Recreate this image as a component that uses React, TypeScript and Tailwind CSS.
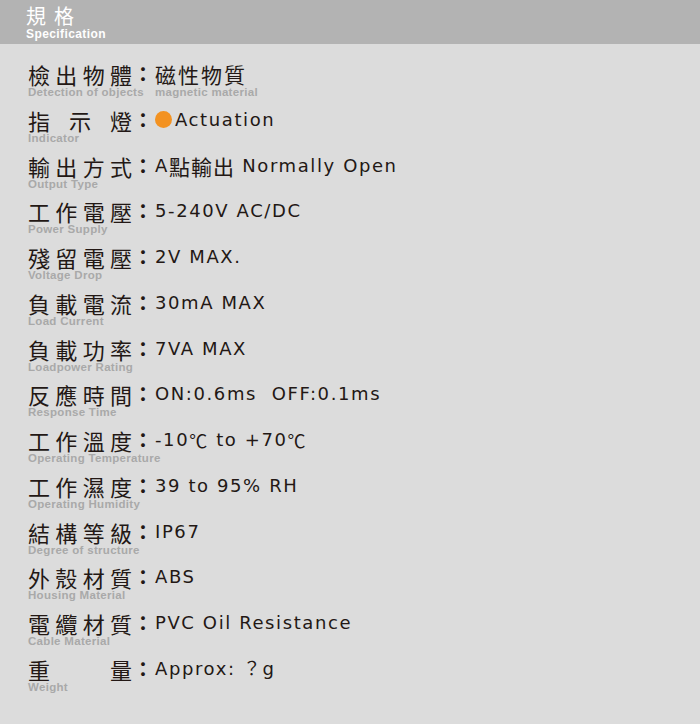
import React from 'react';

interface Spec {
  label: string[];
  en: string;
  value: React.ReactNode;
  valueEn?: string;
}

const SPECS: Spec[] = [
  { label: ['檢', '出', '物', '體'], en: 'Detection of objects', value: <span className="font-['Noto_Sans_CJK_TC',sans-serif] text-[21px] tracking-[2px]">磁性物質</span>, valueEn: 'magnetic material' },
  {
    label: ['指', '示', '燈'],
    en: 'Indicator',
    value: (
      <span className="flex items-center">
        <span className="mr-[3px] inline-block h-[17px] w-[17px] rounded-full bg-[#f39221]" />
        Actuation
      </span>
    ),
  },
  { label: ['輸', '出', '方', '式'], en: 'Output Type', value: <>A<span className="font-['Noto_Sans_CJK_TC',sans-serif] text-[21px] tracking-[1px]">點輸出</span> Normally Open</> },
  { label: ['工', '作', '電', '壓'], en: 'Power Supply', value: '5-240V AC/DC' },
  { label: ['殘', '留', '電', '壓'], en: 'Voltage Drop', value: '2V MAX.' },
  { label: ['負', '載', '電', '流'], en: 'Load Current', value: '30mA MAX' },
  { label: ['負', '載', '功', '率'], en: 'Loadpower Rating', value: '7VA MAX' },
  { label: ['反', '應', '時', '間'], en: 'Response Time', value: 'ON:0.6ms  OFF:0.1ms' },
  { label: ['工', '作', '溫', '度'], en: 'Operating Temperature', value: <>-10<span className="font-['Noto_Sans_CJK_TC',sans-serif]">℃</span> to +70<span className="font-['Noto_Sans_CJK_TC',sans-serif]">℃</span></> },
  { label: ['工', '作', '濕', '度'], en: 'Operating Humidity', value: '39 to 95% RH' },
  { label: ['結', '構', '等', '級'], en: 'Degree of structure', value: 'IP67' },
  { label: ['外', '殼', '材', '質'], en: 'Housing Material', value: 'ABS' },
  { label: ['電', '纜', '材', '質'], en: 'Cable Material', value: 'PVC Oil Resistance' },
  { label: ['重', '量'], en: 'Weight', value: 'Approx: ？g' },
];

const SpecRow = ({ spec }: { spec: Spec }) => (
  <div className="h-[45.77px]">
    <div className="flex h-[24px] items-center text-[#231815]">
      <div className="flex w-[104px] justify-between font-['Noto_Sans_CJK_TC',sans-serif] text-[22px] leading-[24px]">
        {spec.label.map((ch, i) => (
          <span key={i}>{ch}</span>
        ))}
      </div>
      <span className="w-[22px] text-center font-['Noto_Sans_CJK_TC',sans-serif] text-[20px] font-bold leading-[24px]">：</span>
      <div className="ml-[1px] flex items-center whitespace-pre font-['DejaVu_Sans','Noto_Sans_CJK_TC',sans-serif] text-[18px] leading-[24px] tracking-[1.6px]">
        {spec.value}
      </div>
    </div>
    <div className="flex font-['Liberation_Sans',Arial,sans-serif] text-[11.5px] font-bold leading-[13px] tracking-[0.3px] text-[#a9a9a9]">
      <span className="w-[127px] whitespace-nowrap">{spec.en}</span>
      {spec.valueEn && <span className="whitespace-nowrap">{spec.valueEn}</span>}
    </div>
  </div>
);

export default function App() {
  return (
    <div className="h-[724px] w-[700px] overflow-hidden bg-[#dcdcdc]">
      <div className="h-[44px] bg-[#b3b3b3] pl-[26px] pt-[5px] text-white">
        <div className="font-['Noto_Sans_CJK_TC',sans-serif] text-[20px] leading-[22px] tracking-[8px]">規格</div>
        <div className="font-['Liberation_Sans',Arial,sans-serif] text-[12px] font-bold leading-[14px] tracking-[0.4px]">Specification</div>
      </div>
      <div className="pl-[28px] pt-[18px]">
        {SPECS.map((spec) => (
          <SpecRow key={spec.en} spec={spec} />
        ))}
      </div>
    </div>
  );
}
